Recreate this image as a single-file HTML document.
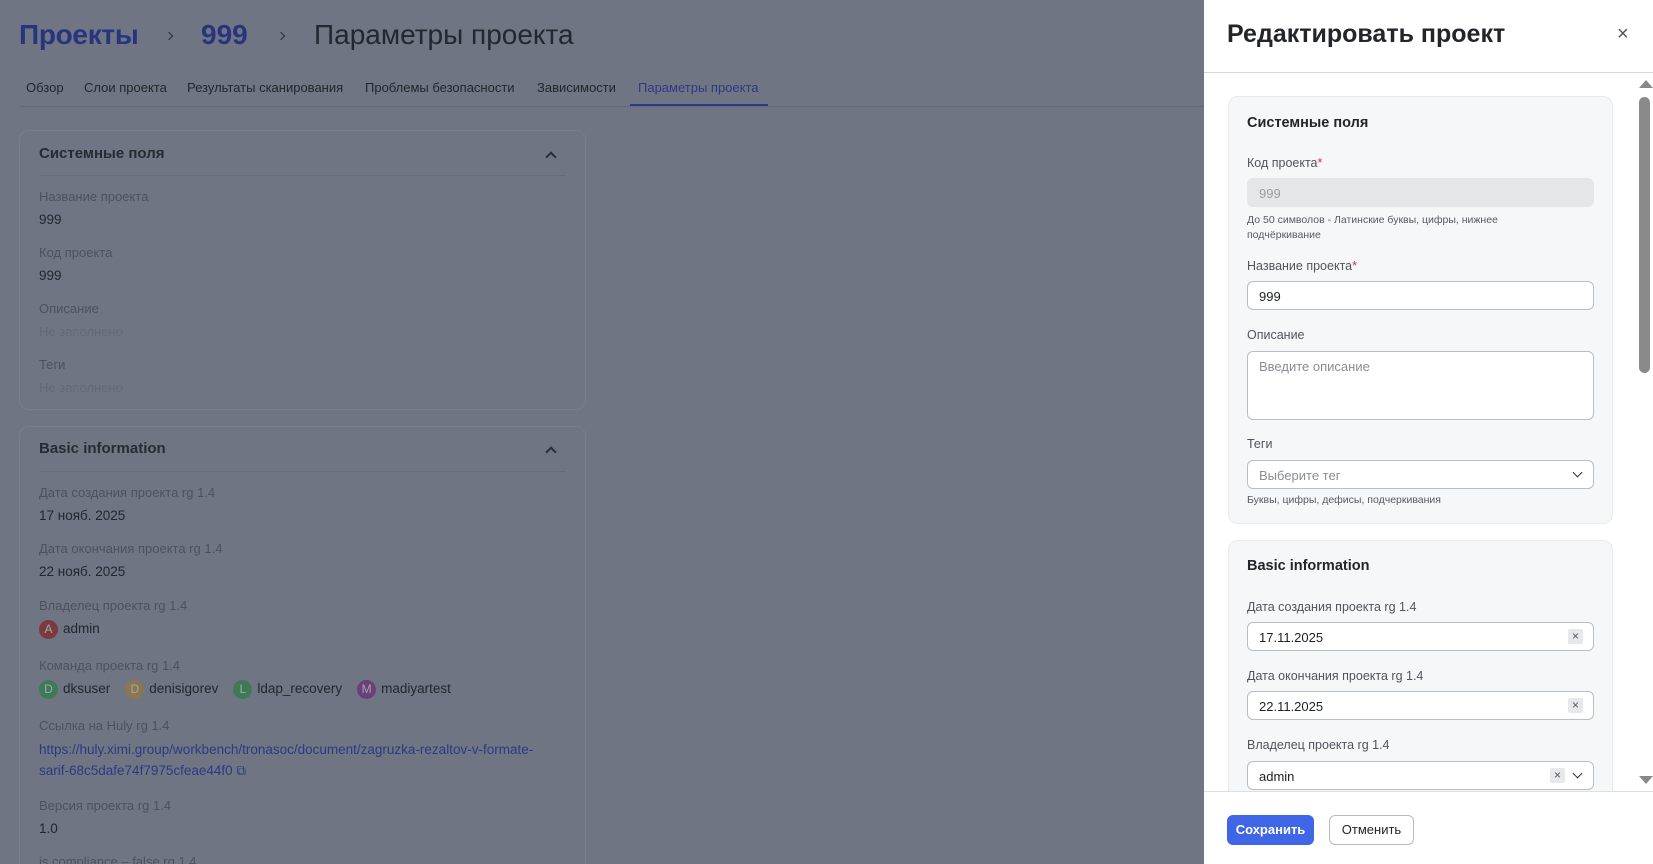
<!DOCTYPE html>
<html><head><meta charset="utf-8"><style>
*{box-sizing:border-box;margin:0;padding:0}
html,body{width:1653px;height:864px;overflow:hidden}
body{background:#6f7582;font-family:"Liberation Sans",sans-serif;position:relative;color:#272b33}
.a{position:absolute;white-space:nowrap}
.lbl{font-size:13px;color:#4d525c}
.val{font-size:13.5px;color:#22262e}
.card{position:absolute;left:19px;width:567px;border:1px solid #787e8a;border-radius:10px;overflow:hidden}
.sep{position:absolute;left:19px;right:19px;height:1px;background:#666c78}
.av{display:inline-block;width:19px;height:19px;border-radius:50%;color:#9aa;font-size:12px;text-align:center;line-height:19px;vertical-align:middle;margin-right:5px}
.chev{position:absolute;left:527px;width:8px;height:8px;border-left:2px solid #2a2e37;border-top:2px solid #2a2e37;transform:rotate(45deg)}
.bc{position:absolute;width:6px;height:6px;border-right:1.5px solid #2a2e37;border-top:1.5px solid #2a2e37;transform:rotate(45deg)}
.p{position:absolute;left:1204px;top:0;width:449px;height:864px;background:#fff;overflow:hidden}
.pc{position:absolute;left:24px;width:385px;background:#f6f7f9;border:1px solid #e8eaee;border-radius:10px}
.pl{position:absolute;left:18px;font-size:12.5px;color:#50545c}
.pl b{color:#e5303a;font-weight:normal}
.in{position:absolute;left:18px;width:347px;height:29px;border:1px solid #b9bdc5;border-radius:6px;background:#fff;font-size:13px;padding:7px 11px;color:#1d2027}
.hint{position:absolute;left:18px;font-size:10.5px;color:#555a63;line-height:15px}
.xb{position:absolute;top:6px;width:15px;height:15px;background:#e7e8eb;border-radius:2px;font-size:12px;line-height:15px;text-align:center;color:#555}
.dd{position:absolute;right:12px;top:8px;width:7px;height:7px;border-right:1.5px solid #333;border-bottom:1.5px solid #333;transform:rotate(45deg)}
</style></head><body>
<div class="a" style="left:19px;top:19px;font-size:28px;color:#27357f;font-weight:bold;letter-spacing:-0.3px">Проекты</div>
<div class="bc" style="left:166px;top:33px"></div>
<div class="a" style="left:201px;top:19px;font-size:28px;color:#27357f;font-weight:bold">999</div>
<div class="bc" style="left:278px;top:33px"></div>
<div class="a" style="left:314px;top:19px;font-size:28px;color:#23272f">Параметры проекта</div>
<div class="a" style="top:80px;left:26px;font-size:13px;color:#22262e">Обзор</div>
<div class="a" style="top:80px;left:84px;font-size:13px;color:#22262e">Слои проекта</div>
<div class="a" style="top:80px;left:187px;font-size:13px;color:#22262e">Результаты сканирования</div>
<div class="a" style="top:80px;left:365px;font-size:13px;color:#22262e">Проблемы безопасности</div>
<div class="a" style="top:80px;left:537px;font-size:13px;color:#22262e">Зависимости</div>
<div class="a" style="top:80px;left:638px;font-size:13px;color:#2c3a86">Параметры проекта</div>
<div class="a" style="left:19px;top:106px;width:1185px;height:1px;background:#646a76"></div>
<div class="a" style="left:630px;top:104px;width:138px;height:2px;background:#2c3a86"></div>

<div class="card" style="top:130px;height:280px">
<div class="a" style="left:19px;top:14px;font-size:15px;font-weight:bold">Системные поля</div>
<div class="chev" style="top:22px"></div>
<div class="sep" style="top:44px"></div>
<div class="a lbl" style="left:19px;top:58px">Название проекта</div>
<div class="a val" style="left:19px;top:81px">999</div>
<div class="a lbl" style="left:19px;top:114px">Код проекта</div>
<div class="a val" style="left:19px;top:137px">999</div>
<div class="a lbl" style="left:19px;top:170px">Описание</div>
<div class="a lbl" style="left:19px;top:193px;color:#646a75">Не заполнено</div>
<div class="a lbl" style="left:19px;top:226px">Теги</div>
<div class="a lbl" style="left:19px;top:249px;color:#646a75">Не заполнено</div>
</div>

<div class="card" style="top:426px;height:460px">
<div class="a" style="left:19px;top:13px;font-size:15px;font-weight:bold">Basic information</div>
<div class="chev" style="top:21px"></div>
<div class="sep" style="top:44px"></div>
<div class="a lbl" style="left:19px;top:58px">Дата создания проекта rg 1.4</div>
<div class="a val" style="left:19px;top:81px">17 нояб. 2025</div>
<div class="a lbl" style="left:19px;top:114px">Дата окончания проекта rg 1.4</div>
<div class="a val" style="left:19px;top:137px">22 нояб. 2025</div>
<div class="a lbl" style="left:19px;top:171px">Владелец проекта rg 1.4</div>
<div class="a val" style="left:19px;top:193px"><span class="av" style="background:#7a3a3e">A</span>admin</div>
<div class="a lbl" style="left:19px;top:231px">Команда проекта rg 1.4</div>
<div class="a val" style="left:19px;top:253px"><span class="av" style="background:#3f7a58">D</span>dksuser &nbsp;&nbsp; <span class="av" style="background:#8c7650">D</span>denisigorev &nbsp;&nbsp; <span class="av" style="background:#3f7a58">L</span>ldap_recovery &nbsp;&nbsp; <span class="av" style="background:#6c3f7c">M</span>madiyartest</div>
<div class="a lbl" style="left:19px;top:291px">Ссылка на Huly rg 1.4</div>
<div class="a" style="left:19px;top:312px;font-size:13.5px;color:#2c3a86;line-height:21px">https://huly.ximi.group/workbench/tronasoc/document/zagruzka-rezaltov-v-formate-<br>sarif-68c5dafe74f7975cfeae44f0 ⧉</div>
<div class="a lbl" style="left:19px;top:371px">Версия проекта rg 1.4</div>
<div class="a val" style="left:19px;top:394px">1.0</div>
<div class="a lbl" style="left:19px;top:427px">is compliance – false rg 1.4</div>
</div>

<div class="p">
<div class="a" style="left:23px;top:20px;font-size:25px;font-weight:bold;color:#23252b">Редактировать проект</div>
<div class="a" style="left:413px;top:23px;font-size:20px;color:#555">×</div>
<div class="a" style="left:0;top:72px;width:449px;height:1px;background:#d6d8dc"></div>
<div class="a" style="left:435px;top:80px;width:0;height:0;border-left:7px solid transparent;border-right:7px solid transparent;border-bottom:8px solid #888"></div>
<div class="a" style="left:435px;top:97px;width:11px;height:276px;background:#8a8a8a;border-radius:6px"></div>
<div class="a" style="left:435px;top:776px;width:0;height:0;border-left:7px solid transparent;border-right:7px solid transparent;border-top:8px solid #888"></div>

<div class="pc" style="top:96px;height:428px">
<div class="a" style="left:18px;top:18px;font-size:14.5px;font-weight:bold;color:#23252b">Системные поля</div>
<div class="pl" style="top:59px">Код проекта<b>*</b></div>
<div class="in" style="top:81px;background:#e5e6e9;border-color:#e5e6e9;color:#9a9da3">999</div>
<div class="hint" style="top:116px">До 50 символов - Латинские буквы, цифры, нижнее<br>подчёркивание</div>
<div class="pl" style="top:162px">Название проекта<b>*</b></div>
<div class="in" style="top:184px">999</div>
<div class="pl" style="top:231px">Описание</div>
<div class="in" style="top:254px;height:69px;color:#8a8d94">Введите описание</div>
<div class="pl" style="top:340px">Теги</div>
<div class="in" style="top:363px;color:#8a8d94">Выберите тег<span class="dd"></span></div>
<div class="hint" style="top:396px">Буквы, цифры, дефисы, подчеркивания</div>
</div>

<div class="pc" style="top:540px;height:260px">
<div class="a" style="left:18px;top:17px;font-size:14.5px;font-weight:bold;color:#23252b">Basic information</div>
<div class="pl" style="top:59px">Дата создания проекта rg 1.4</div>
<div class="in" style="top:81px">17.11.2025<span class="xb" style="right:10px">×</span></div>
<div class="pl" style="top:128px">Дата окончания проекта rg 1.4</div>
<div class="in" style="top:150px">22.11.2025<span class="xb" style="right:10px">×</span></div>
<div class="pl" style="top:197px">Владелец проекта rg 1.4</div>
<div class="in" style="top:220px">admin<span class="xb" style="right:28px">×</span><span class="dd"></span></div>
</div>

<div class="a" style="left:0;top:791px;width:449px;height:73px;background:#fff;border-top:1px solid #dcdee2"></div>
<div class="a" style="left:23px;top:815px;width:87px;height:30px;background:#3f66e6;border-radius:6px;color:#fff;font-size:13px;font-weight:bold;text-align:center;line-height:30px">Сохранить</div>
<div class="a" style="left:125px;top:815px;width:85px;height:30px;border:1px solid #b8bbc2;border-radius:6px;color:#23252b;font-size:13px;text-align:center;line-height:28px">Отменить</div>
</div>
</body></html>
